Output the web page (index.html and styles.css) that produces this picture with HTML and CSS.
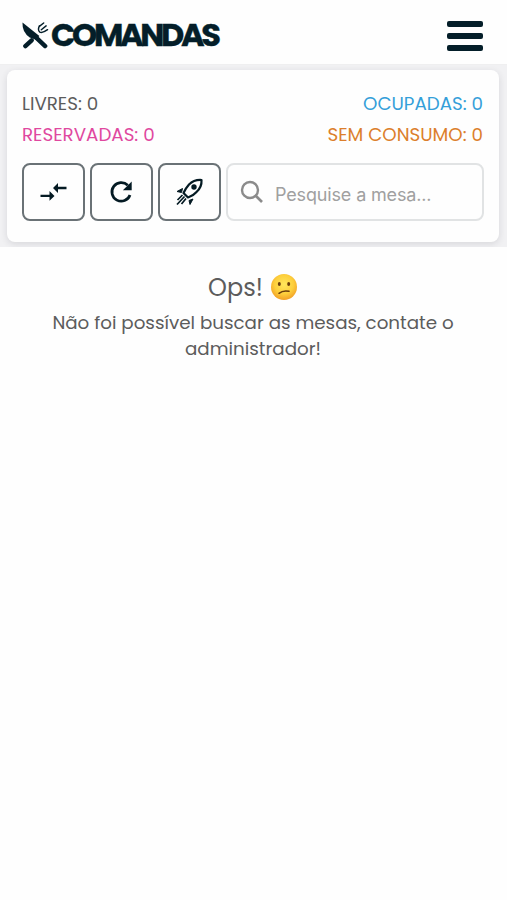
FILE: index.html
```
<!DOCTYPE html>
<html lang="pt-BR">
<head>
    <meta charset="UTF-8">
    <meta name="viewport" content="width=device-width, initial-scale=1.0">
    <title>Comandas</title>
    <link rel="stylesheet" href="styles.css">
</head>
<body>
    <header class="header">
        <div class="logo">
            <svg class="logo-icon" viewBox="0 0 28 28" aria-hidden="true">
                <path d="M0.500 1 L18 15 L14.500 19 L8 16.500 Q0 11 0.500 1Z" fill="currentColor"/>
                <path d="M15 17 L24 25.500 M3.500 25.500 L10 19.500" fill="none" stroke="currentColor" stroke-width="4.600" stroke-linecap="round"/>
                <path d="M18 4.500 Q16 9 18.500 11 Q21 12.500 26.500 8.500 M22.500 1.500 L18 5 M25 4.500 L20 8.500" fill="none" stroke="currentColor" stroke-width="1.500" stroke-linecap="round"/>
            </svg>
            <span class="logo-text">COMANDAS</span>
        </div>
        <button class="menu" aria-label="Menu">
            <span></span>
            <span></span>
            <span></span>
        </button>
    </header>

    <section class="panel">
        <div class="card">
            <div class="status-row">
                <span class="livres">LIVRES: 0</span>
                <span class="ocupadas">OCUPADAS: 0</span>
            </div>
            <div class="status-row">
                <span class="reservadas">RESERVADAS: 0</span>
                <span class="consumo">SEM CONSUMO: 0</span>
            </div>
            <div class="actions">
                <button class="btn" aria-label="Transferir">
                    <svg width="28" height="28" viewBox="0 0 28 28">
                        <path d="M.5 16.700h9V13l5 4.900-5 4.900v-3.700H.5z M26.500 8.800h-8.500V5.100l-5 4.900 5 4.900v-3.700h8.500z" fill="currentColor"/>
                    </svg>
                </button>
                <button class="btn" aria-label="Atualizar">
                    <svg width="28" height="28" viewBox="0 0 28 28">
                        <path d="M22 17A9.300 9.300 0 1 1 19.800 7.300" fill="none" stroke="currentColor" stroke-width="2.700"/>
                        <path d="M23.700 3.500v8.800h-8.800z" fill="currentColor"/>
                    </svg>
                </button>
                <button class="btn" aria-label="Abrir">
                    <svg width="28" height="28" viewBox="0 0 28 28">
                        <path d="M25.500 2 Q18 1.500 13 6.500 Q9.500 10.500 7.500 15 L12 19.500 Q17 18 20.500 14 Q26 9 25.500 2Z" fill="none" stroke="currentColor" stroke-width="2.200" stroke-linejoin="round"/>
                        <circle cx="18" cy="9" r="2.700" fill="currentColor"/>
                        <path d="M6.500 10.500 L1 13.500 L5.500 14.500Z M17 21 L14 26.500 L13 22.500Z" fill="currentColor" stroke="currentColor"/>
                        <path d="M6.500 17 L1.500 22 M8.500 18.500 L1 26.500 M10 20.500 L5.500 26" fill="none" stroke="currentColor" stroke-width="1.700"/>
                    </svg>
                </button>
                <label class="search">
                    <svg width="24" height="24" viewBox="0 0 24 24">
                        <circle cx="10" cy="10" r="8" fill="none" stroke="currentColor" stroke-width="2.400"/>
                        <path d="M15.500 15.500L22 22" fill="none" stroke="currentColor" stroke-width="2.600"/>
                    </svg>
                    <input type="text" placeholder="Pesquise a mesa...">
                </label>
            </div>
        </div>
    </section>

    <main class="empty">
        <h2>
            <span>Ops!</span>
            <svg width="28" height="28" viewBox="0 0 28 28" role="img" aria-label="Confuso">
                <defs>
                    <radialGradient id="face" cx="50%" cy="40%" r="60%">
                        <stop offset="0" stop-color="#ffe65c"/>
                        <stop offset=".6" stop-color="#fdcf3c"/>
                        <stop offset="1" stop-color="#f2a026"/>
                    </radialGradient>
                </defs>
                <circle cx="14" cy="14" r="13" fill="url(#face)"/>
                <ellipse cx="9.300" cy="11" rx="1.500" ry="2" fill="#6b3d0c"/>
                <ellipse cx="18.700" cy="11" rx="1.500" ry="2" fill="#6b3d0c"/>
                <path d="M9 20.300Q13 17 19 18.300" fill="none" stroke="#6b3d0c" stroke-width="1.500" stroke-linecap="round"/>
            </svg>
        </h2>
        <p class="line-top">Não foi possível buscar as mesas, contate o</p>
        <p class="line-bottom">administrador!</p>
    </main>
</body>
</html>
```
FILE: styles.css
```
* {
    box-sizing: border-box;
}
body {
    margin: 0;
    background: #fefefe;
    color: #5c5c5c;
    font-family: Poppins, Inter, sans-serif;
}
.header {
    height: 65px;
    padding: 7px 23px 0 22px;
    display: flex;
    align-items: center;
    justify-content: space-between;
    border-bottom: 1px solid #efeff0;
}
.logo {
    display: flex;
    align-items: center;
    gap: 2px;
    margin-bottom: 2px;
    color: #041e29;
}
.logo-icon {
    width: 27px;
    height: 28px;
}
.logo-text {
    font-size: 32px;
    line-height: 36px;
    font-weight: 700;
    letter-spacing: -3.3px;
    -webkit-text-stroke: 0.4px currentColor;
}
.menu {
    width: 37px;
    padding: 0;
    border: 0;
    background: none;
    display: flex;
    flex-direction: column;
    gap: 6px;
}
.menu span {
    height: 6px;
    width: 36px;
    border-radius: 2px;
    background: #041e29;
}
.panel {
    height: 182px;
    padding: 5px 8px 0 7px;
    background: #f1f1f3;
    overflow: hidden;
}
.card {
    height: 172px;
    padding: 18px 15px 0;
    background: #fefefe;
    border-radius: 8px;
    box-shadow: 0 2px 7px rgba(30, 35, 50, 0.12);
}
.status-row {
    height: 31px;
    padding-right: 1px;
    display: flex;
    justify-content: space-between;
    font-size: 18.3px;
    line-height: 31px;
}
.ocupadas {
    color: #359fd9;
}
.reservadas {
    color: #e0489f;
}
.consumo {
    color: #dc7f2c;
}
.actions {
    display: flex;
    gap: 5px;
    margin-top: 13px;
}
.btn {
    width: 63px;
    height: 58px;
    padding: 0;
    display: flex;
    align-items: center;
    justify-content: center;
    border: 2px solid #6a7276;
    border-radius: 8px;
    background: #fefefe;
    color: #041a23;
}
.search {
    flex: 1;
    min-width: 0;
    height: 58px;
    padding: 0 12px;
    display: flex;
    align-items: center;
    gap: 11px;
    border: 2px solid #e1e3e4;
    border-radius: 8px;
    color: #8b8b8b;
}
.search svg {
    flex: none;
}
.search input {
    width: 100%;
    min-width: 0;
    padding: 4px 0 0;
    border: 0;
    outline: 0;
    background: none;
    font-family: Inter, sans-serif;
    font-size: 18px;
    letter-spacing: -0.15px;
}
.search input::placeholder {
    color: #a0a0a0;
    opacity: 1;
}
.empty {
    padding: 22px 1px 0 0;
    text-align: center;
}
.empty h2 {
    margin: 0;
    height: 36px;
    display: flex;
    align-items: center;
    justify-content: center;
    gap: 7px;
    font-size: 24px;
    font-weight: 400;
}
.empty p {
    margin: 0;
    font-size: 18.3px;
    line-height: 26px;
    white-space: nowrap;
}
.empty .line-top {
    margin-top: 5px;
}
```
